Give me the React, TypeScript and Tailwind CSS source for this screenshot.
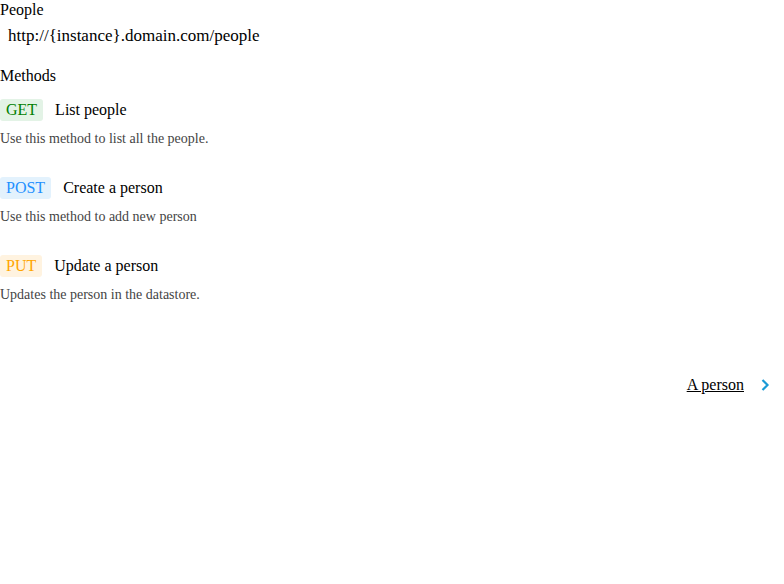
import React from "react";

const methods = [
  { verb: "GET", title: "List people", desc: "Use this method to list all the people.", badge: "bg-[#e3f3e6] text-[#008000]" },
  { verb: "POST", title: "Create a person", desc: "Use this method to add new person", badge: "bg-[#e3f2fd] text-[#1e90ff]" },
  { verb: "PUT", title: "Update a person", desc: "Updates the person in the datastore.", badge: "bg-[#fff3e0] text-[#ffa500]" },
];

export default function App() {
  return (
    <div className="w-[784px] h-[584px] bg-white text-black font-['Liberation_Serif',serif] text-[16px] leading-[18px]">
      <div className="pt-[1px]">People</div>
      <div className="pl-[8px] mt-[7px] text-[17px] leading-[20px]">http://{"{"}instance{"}"}.domain.com/people</div>
      <div className="mt-[21px]">Methods</div>
      <div className="flex flex-col gap-[30px] mt-[14px]">
        {methods.map((m) => (
          <div key={m.verb}>
            <div className="flex items-center gap-[12px]">
              <span className={`px-[6px] py-[2px] rounded-[3px] ${m.badge}`}>{m.verb}</span>
              <span>{m.title}</span>
            </div>
            <div className="mt-[10px] text-[14px] leading-[16px] text-[#444]">{m.desc}</div>
          </div>
        ))}
      </div>
      <div className="flex justify-end items-center gap-[16px] pr-[14px] mt-[73px]">
        <span className="underline">A person</span>
        <svg width="10" height="14" viewBox="0 0 10 14" fill="none">
          <path d="M2.5 2 L7.5 7 L2.5 12" stroke="#1a9ad6" strokeWidth="2.2" />
        </svg>
      </div>
    </div>
  );
}
